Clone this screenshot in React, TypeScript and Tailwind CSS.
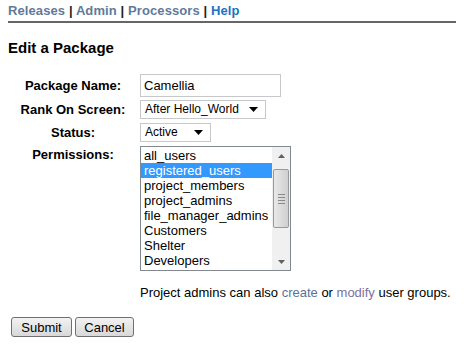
import React from 'react';

const groups = [
  'all_users',
  'registered_users',
  'project_members',
  'project_admins',
  'file_manager_admins',
  'Customers',
  'Shelter',
  'Developers',
];

const Caret = () => (
  <svg width="9" height="5" viewBox="0 0 9 5" className="ml-auto">
    <path d="M0 0h9L4.5 5z" fill="#000" />
  </svg>
);

const Label = ({ children }: { children: React.ReactNode }) => (
  <td className="w-[130px] p-0 text-center align-top text-[13px] font-bold leading-[16px]">
    {children}
  </td>
);

const App = () => {
  return (
    <div className="min-h-[349px] bg-white px-2 pt-[3px] font-['Liberation_Sans',Arial,sans-serif] text-black">
      {/* Top nav */}
      <div className="text-[13px] font-bold leading-[16px] tracking-[0.1px]">
        <a className="text-[#5f7a9b]">Releases</a>
        <span className="text-[#222]"> | </span>
        <a className="text-[#5f7a9b]">Admin</a>
        <span className="text-[#222]"> | </span>
        <a className="text-[#5f7a9b]">Processors</a>
        <span className="text-[#222]"> | </span>
        <a className="text-[#1a73c4]">Help</a>
      </div>
      <div className="mt-[2px] border-t-2 border-[#666]"></div>

      <h2 className="mt-[16px] text-[15px] font-bold leading-[18px]">Edit a Package</h2>

      <table className="mt-[17px] border-separate border-spacing-0">
        <tbody>
          <tr>
            <td className="w-[130px] p-0 text-center align-middle text-[13px] font-bold leading-[16px]">
              Package Name:
            </td>
            <td className="py-0 pl-[2px] pr-0">
              <div className="flex h-[23px] w-[141px] items-center border border-[#c6c8cc] px-[3px] text-[13px]">
                Camellia
              </div>
            </td>
          </tr>
          <tr>
            <td className="w-[130px] p-0 pt-[3px] text-center align-middle text-[13px] font-bold leading-[16px]">
              Rank On Screen:
            </td>
            <td className="pb-0 pl-[2px] pr-0 pt-[3px]">
              <div className="flex h-[19px] w-[126px] items-center border border-[#c6c8cc] pl-[4px] pr-[7px] text-[12px] leading-[15px]">
                After Hello_World
                <Caret />
              </div>
            </td>
          </tr>
          <tr>
            <td className="w-[130px] p-0 pt-[4px] text-center align-middle text-[13px] font-bold leading-[16px]">
              Status:
            </td>
            <td className="pb-0 pl-[2px] pr-0 pt-[4px]">
              <div className="flex h-[19px] w-[71px] items-center border border-[#c6c8cc] pl-[4px] pr-[7px] text-[12px] leading-[15px]">
                Active
                <Caret />
              </div>
            </td>
          </tr>
          <tr>
            <Label>
              <div className="pt-[5px]">Permissions:</div>
            </Label>
            <td className="pb-0 pl-[2px] pr-0 pt-[4px]">
              <div className="flex h-[125px] w-[151px] border border-[#828790] bg-white">
                <ul className="flex-1 py-[1px] text-[13px] leading-[15px]">
                  {groups.map((g, i) => (
                    <li
                      key={g}
                      className={i === 1 ? 'bg-[#3399ff] pl-[3px] text-white' : 'pl-[3px]'}
                    >
                      {g}
                    </li>
                  ))}
                </ul>
                {/* scrollbar */}
                <div className="flex w-[18px] flex-col bg-[#f0f0f0]">
                  <div className="flex h-[17px] items-center justify-center">
                    <svg width="7" height="4" viewBox="0 0 7 4">
                      <path d="M3.5 0L7 4H0z" fill="#606060" />
                    </svg>
                  </div>
                  <div className="mx-[1px] mt-[5px] flex h-[59px] flex-col items-center justify-center gap-[2px] rounded-[2px] border border-[#999] bg-gradient-to-r from-[#e8e8e8] via-[#dcdcdc] to-[#cfcfcf]">
                    <div className="h-px w-[7px] bg-[#8a8a8a]"></div>
                    <div className="h-px w-[7px] bg-[#8a8a8a]"></div>
                    <div className="h-px w-[7px] bg-[#8a8a8a]"></div>
                    <div className="h-px w-[7px] bg-[#8a8a8a]"></div>
                  </div>
                  <div className="mt-auto flex h-[17px] items-center justify-center">
                    <svg width="7" height="4" viewBox="0 0 7 4">
                      <path d="M0 0h7L3.5 4z" fill="#606060" />
                    </svg>
                  </div>
                </div>
              </div>
            </td>
          </tr>
          <tr>
            <td className="p-0"></td>
            <td className="pb-0 pl-[2px] pr-0 pt-[14px] text-[13px] leading-[16px] whitespace-nowrap">
              Project admins can also <a className="text-[#5d7097]">create</a> or{' '}
              <a className="text-[#7a70a0]">modify</a> user groups.
            </td>
          </tr>
        </tbody>
      </table>

      <div className="mt-[16px] flex gap-[3px] pl-[3px]">
        <button className="h-[20px] w-[61px] rounded-[3px] border border-[#707070] bg-gradient-to-b from-[#f2f2f2] to-[#d8d8d8] text-[13px] leading-[15px]">
          Submit
        </button>
        <button className="h-[20px] w-[59px] rounded-[3px] border border-[#707070] bg-gradient-to-b from-[#f2f2f2] to-[#d8d8d8] text-[13px] leading-[15px]">
          Cancel
        </button>
      </div>
    </div>
  );
};

export default App;
